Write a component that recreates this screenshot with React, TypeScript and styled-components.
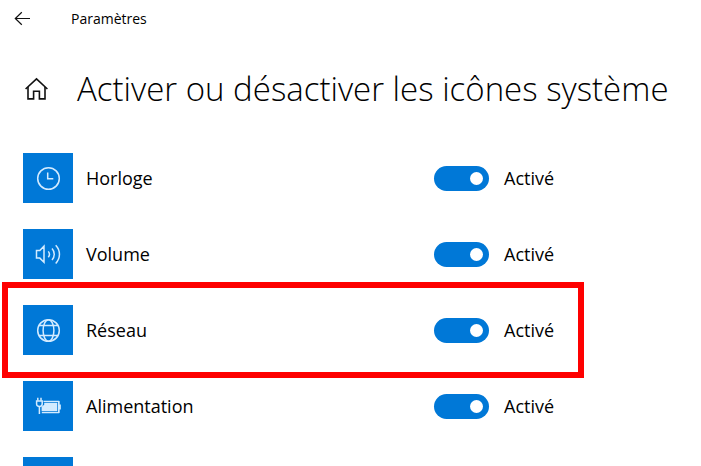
import React, { useState } from "react";
import styled, { createGlobalStyle } from "styled-components";

const GlobalStyle = createGlobalStyle`
  *, *::before, *::after { box-sizing: border-box; }
  body {
    margin: 0;
    background: #fff;
    color: #000;
    font-family: "Open Sans", "Noto Sans", sans-serif;
  }
`;

const Page = styled.div`
  height: 100vh;
  overflow: hidden;
`;

const TitleBar = styled.header`
  display: flex;
  align-items: center;
  gap: 38px;
  height: 37px;
  padding-left: 13px;
`;

const IconButton = styled.button`
  display: flex;
  flex: none;
  padding: 0;
  border: 0;
  background: none;
  color: #111;
`;

const AppName = styled.span`
  font-size: 14px;
  line-height: 21px;
`;

const Heading = styled.div`
  display: flex;
  align-items: center;
  gap: 28px;
  height: 103px;
  padding-left: 24px;
`;

const Title = styled.h1`
  margin: 0;
  font-size: 33px;
  font-weight: 300;
  line-height: 48px;
  white-space: nowrap;
`;

const List = styled.ul`
  display: flex;
  flex-direction: column;
  gap: 26px;
  margin: 0;
  padding: 13px 23px 0;
  list-style: none;
`;

const Row = styled.li<{ $marked?: boolean }>`
  position: relative;
  display: grid;
  grid-template-columns: 50px minmax(120px, 335px) 55px 1fr;
  align-items: center;
  column-gap: 13px;

  &::after {
    content: ${(p) => (p.$marked ? '""' : "none")};
    position: absolute;
    top: -23px;
    bottom: -23px;
    left: -21px;
    width: 582px;
    border: 6px solid #fe0000;
    pointer-events: none;
  }
`;

const Tile = styled.span`
  display: flex;
  align-items: center;
  justify-content: center;
  height: 50px;
  background: #0078d7;
  color: #d3ebff;
`;

const Label = styled.label`
  font-size: 18px;
  line-height: 24px;
`;

const Switch = styled.input`
  display: flex;
  align-items: center;
  appearance: none;
  width: 55px;
  height: 25px;
  margin: 0;
  padding: 0 6px;
  border-radius: 13px;
  background: #767676;

  &::before {
    content: "";
    width: 13px;
    height: 13px;
    border-radius: 50%;
    background: #fff;
  }

  &:checked {
    justify-content: flex-end;
    background: #0078d7;
  }
`;

const State = styled.span`
  padding-left: 2px;
  font-size: 18px;
  line-height: 24px;
`;

const Glyph = ({ children }: { children: React.ReactNode }) => (
  <svg width="26" height="26" viewBox="0 0 26 26" fill="none" stroke="currentColor" strokeWidth="1.5" aria-hidden="true">
    {children}
  </svg>
);

const ClockIcon = () => (
  <Glyph>
    <circle cx="13.5" cy="13.5" r="10.8" />
    <path d="M12.7 7.5v6.2h5.6" />
  </Glyph>
);

const VolumeIcon = () => (
  <Glyph>
    <path d="M1.5 9.5h3.3L9 5.2v16.1l-4.2-4.2H1.5z" />
    <path d="M13.3 10.4c1.3 1.6 1.3 4.2 0 5.8M17 7.6c3 3.2 3 8.2 0 11.4M20.7 4.2c5 5.2 5 13 0 18.2" />
  </Glyph>
);

const GlobeIcon = () => (
  <Glyph>
    <circle cx="13.5" cy="13.5" r="10.8" />
    <ellipse cx="13.5" cy="13.5" rx="5.4" ry="10.8" />
    <path d="M3.8 8.6h19.4M3.8 18.6h19.4" />
  </Glyph>
);

const PowerIcon = () => (
  <Glyph>
    <path d="M8.5 8.4h15v11.2H6.8" strokeWidth="1.2" />
    <path d="M9.2 9.8h13v8.4H6.6v-4.4l2.6-2z" fill="currentColor" stroke="none" />
    <path d="M24 8v12M25.2 11.5v5" strokeWidth="1.3" />
    <path d="M2.8 4.8v3M6 4.8v3M4.4 13v8" />
    <path d="M1.6 8h5.6v3c0 3.4-5.6 3.4-5.6 0z" />
  </Glyph>
);

const items = [
  { id: "clock", name: "Horloge", Icon: ClockIcon },
  { id: "volume", name: "Volume", Icon: VolumeIcon },
  { id: "network", name: "Réseau", Icon: GlobeIcon, marked: true },
  { id: "power", name: "Alimentation", Icon: PowerIcon },
];

function Setting({ id, name, Icon, marked }: { id: string; name: string; Icon: React.ComponentType; marked?: boolean }) {
  const [on, setOn] = useState(true);
  return (
    <Row $marked={marked}>
      <Tile><Icon /></Tile>
      <Label htmlFor={id}>{name}</Label>
      <Switch id={id} type="checkbox" role="switch" checked={on} onChange={() => setOn(!on)} />
      <State>{on ? "Activé" : "Désactivé"}</State>
    </Row>
  );
}

export default function App() {
  return (
    <Page>
      <GlobalStyle />
      <TitleBar>
        <IconButton aria-label="Retour">
          <svg width="20" height="20" viewBox="0 0 20 20" fill="none" stroke="currentColor" strokeWidth="1.2">
            <path d="M2.3 9.5H17M8.8 3.2L2.3 9.5l6.5 6.3" />
          </svg>
        </IconButton>
        <AppName>Paramètres</AppName>
      </TitleBar>
      <Heading>
        <IconButton aria-label="Accueil">
          <svg width="25" height="25" viewBox="0 0 25 25" fill="none" stroke="currentColor" strokeWidth="1.6">
            <path d="M1.6 13L12.5 2.8 23.4 13" />
            <path d="M4 11v11.9h5.6v-7.6h5.8v7.6H21V11" />
          </svg>
        </IconButton>
        <Title>Activer ou désactiver les icônes système</Title>
      </Heading>
      <List>
        {items.map((item) => (
          <Setting key={item.id} {...item} />
        ))}
        <Row aria-hidden="true">
          <Tile />
        </Row>
      </List>
    </Page>
  );
}
